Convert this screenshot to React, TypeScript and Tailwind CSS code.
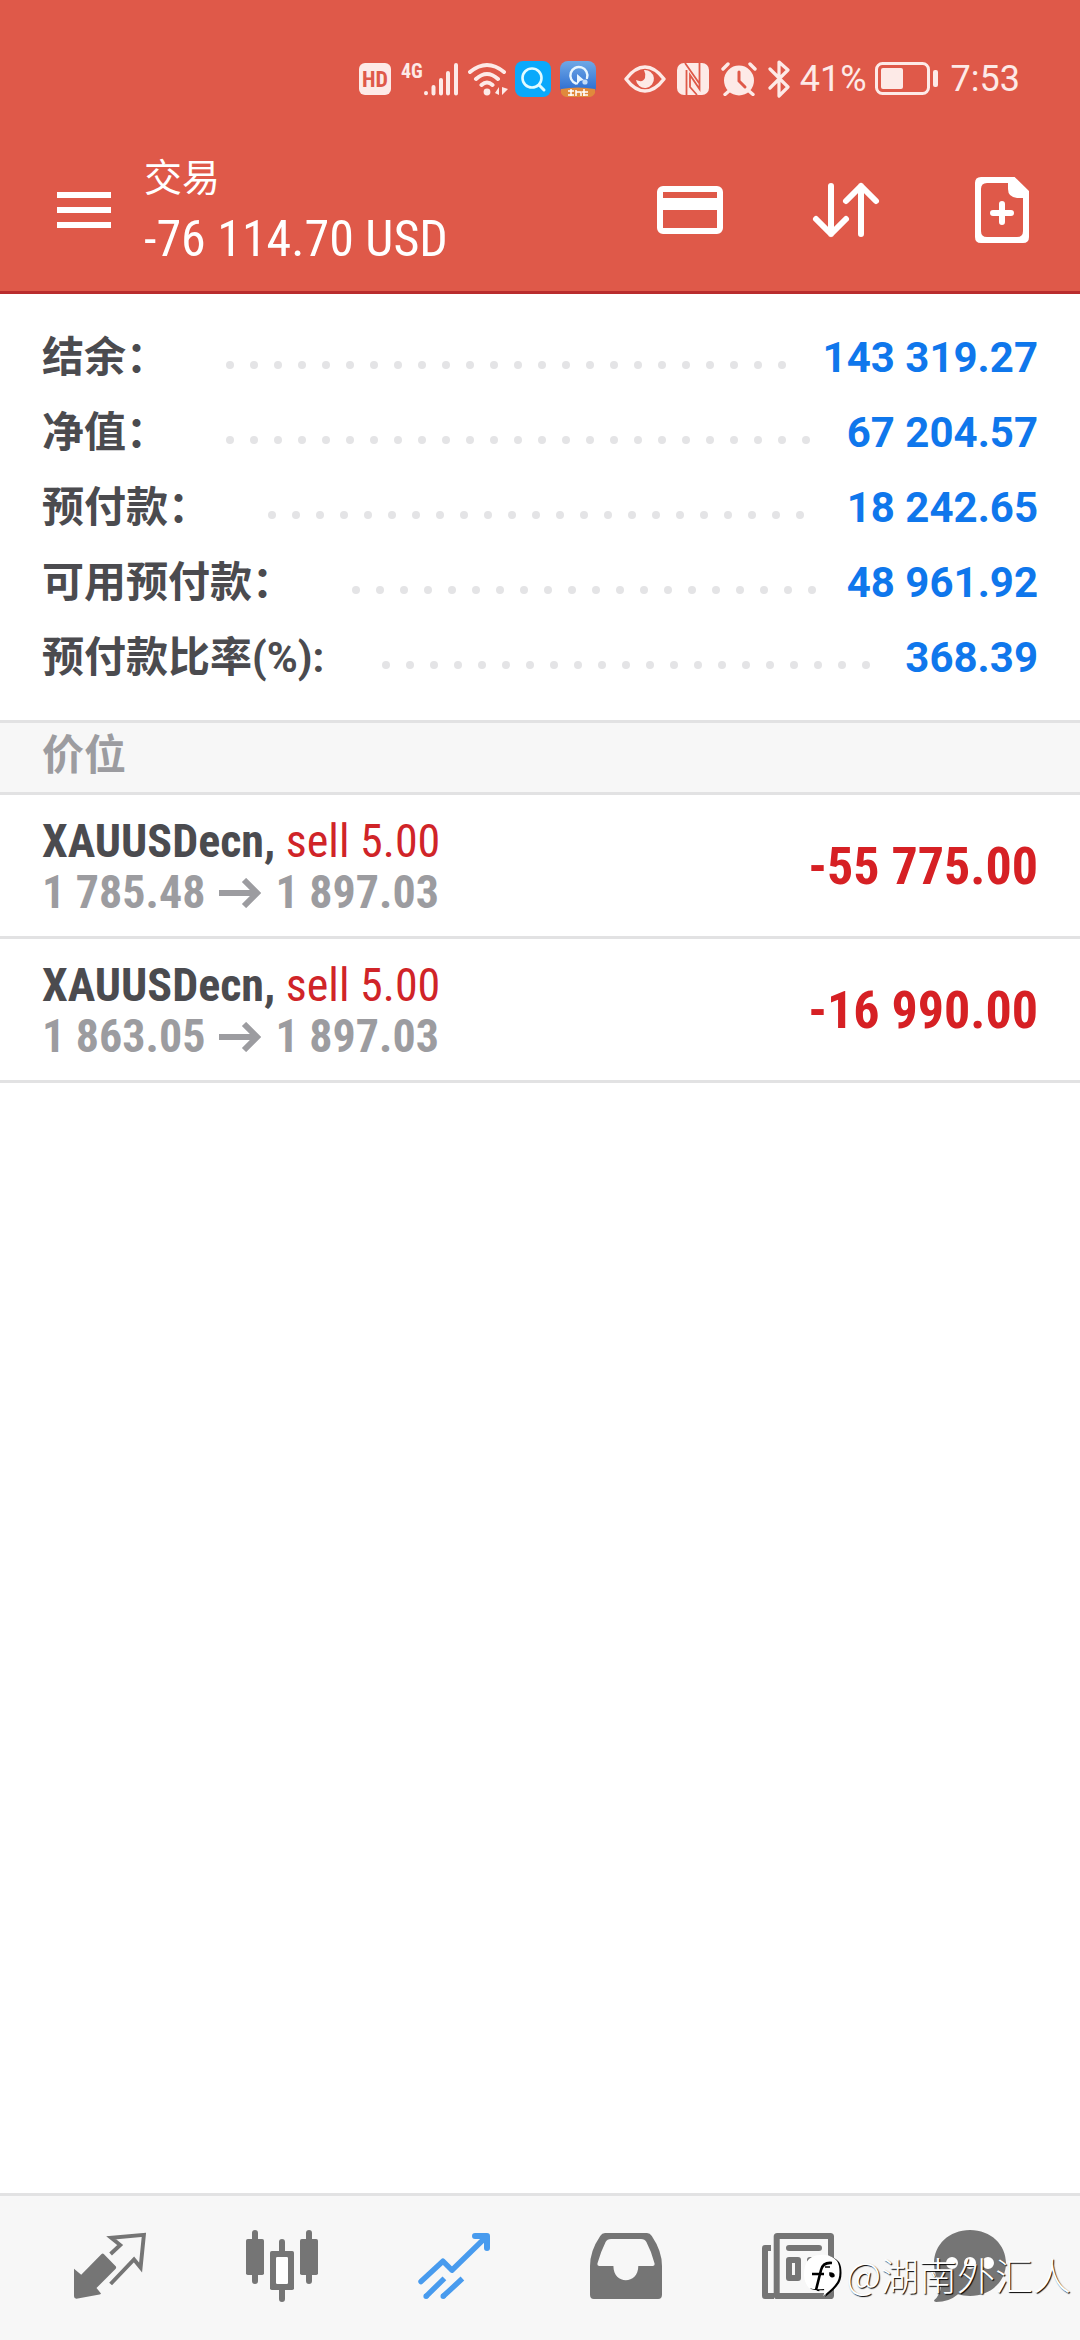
import React from 'react';

const summary = [
  { label: '结余：', value: '143 319.27' },
  { label: '净值：', value: '67 204.57' },
  { label: '预付款：', value: '18 242.65' },
  { label: '可用预付款：', value: '48 961.92' },
  { label: '预付款比率(%):', value: '368.39' },
];

const positions = [
  { id: 1, symbol: 'XAUUSDecn', side: 'sell 5.00', open: '1 785.48', current: '1 897.03', profit: '-55 775.00' },
  { id: 2, symbol: 'XAUUSDecn', side: 'sell 5.00', open: '1 863.05', current: '1 897.03', profit: '-16 990.00' },
];

function StatusBar() {
  return (
    <div className="flex h-[129px] items-center justify-end pr-[60px] pt-[29px] text-[#fdeae7]">
      <span className="flex h-8 w-8 items-center justify-center rounded-md bg-[#fdeae7] font-['Roboto_Condensed',Roboto,sans-serif] text-[22px] font-bold text-[#df5949]">
        HD
      </span>
      <span className="ml-[10px] flex h-[34px] items-start">
        <span className="font-['Roboto_Condensed',Roboto,sans-serif] text-[20px] font-bold leading-[18px]">4G</span>
        <svg className="h-[34px] w-9" viewBox="0 0 36 34" stroke="currentColor" strokeWidth="4" strokeLinecap="round">
          <path d="M3 31v.2M10.500 25v6.500M18 18v13.500M25 11v20.500M33 3v28.500" />
        </svg>
      </span>
      {/* Wi-Fi */}
      <svg className="ml-[9px] h-[34px] w-10" viewBox="0 0 40 34" fill="none" stroke="currentColor" strokeWidth="4" strokeLinecap="round">
        <path d="M2 10Q19-4 36 10M8 17Q19 7 30 17M13.500 23Q19 18 24.500 23" />
        <circle cx="19" cy="30" r="3.400" fill="currentColor" stroke="none" />
        <path d="M27 31l4-6v8zM34 25v8l6-6z" fill="currentColor" stroke="none" />
      </svg>
      {/* Search app */}
      <svg className="ml-[7px] h-9 w-9" viewBox="0 0 36 36" fill="none">
        <rect width="36" height="36" rx="8" fill="#0aa9fb" />
        <circle cx="17" cy="17" r="9.500" stroke="#e2fbff" strokeWidth="2.600" />
        <path d="M24 24l5 5" stroke="#e2fbff" strokeWidth="3" strokeLinecap="round" />
      </svg>
      {/* Browser app */}
      <svg className="ml-[9px] h-9 w-9" viewBox="0 0 36 36" fill="none">
        <defs>
          <linearGradient id="browser" x1="0" y1="0" x2="0" y2="1">
            <stop offset="0" stopColor="#6fa8e6" />
            <stop offset="1" stopColor="#2466cf" />
          </linearGradient>
        </defs>
        <rect width="36" height="34" rx="8" fill="url(#browser)" />
        <path d="M16 22.500A8.500 8.500 0 1 1 27 17" stroke="#e8f6ff" strokeWidth="2.400" strokeLinecap="round" />
        <path d="M17 13l7 6-4 1-3 4z" fill="#e8f6ff" />
        <circle cx="25" cy="21" r="2.600" fill="#c3dcf7" />
        <path d="M1 28q17-3 34 0v4q-2 4-6 4H7q-4 0-6-4z" fill="#e08a3c" />
        <path d="M8 30h6M11 28v7M8 34h6M16 29v6M16 31h5v4M24 28v7M22 31h6M23 34h5" stroke="#fff" strokeWidth="1.500" />
      </svg>
      {/* Eye comfort */}
      <svg className="ml-7 h-7 w-[42px]" viewBox="0 0 42 28" fill="none">
        <path d="M2 14Q11 2 21 2t19 12Q31 26 21 26T2 14z" stroke="currentColor" strokeWidth="3.400" strokeLinejoin="round" />
        <path d="M20 5a9 9 0 1 1-8 10q7 3 9-2 1-4-1-8z" fill="currentColor" />
      </svg>
      {/* NFC */}
      <svg className="ml-[11px] h-[34px] w-8" viewBox="0 0 32 34" fill="none">
        <rect y="1" width="32" height="32" rx="7" fill="currentColor" />
        <path d="M9.500 8v25M8 1l14 20M22.500 1v26L13 13v12l7 8" stroke="#df5949" strokeWidth="1.800" />
      </svg>
      {/* Alarm */}
      <svg className="ml-3 h-[34px] w-9" viewBox="0 0 36 34" fill="none" strokeLinecap="round">
        <circle cx="18" cy="18.500" r="15" fill="currentColor" />
        <path d="M2 7l5-5M34 7l-5-5M8 29l-4 3.500M28 29l4 3.500" stroke="currentColor" strokeWidth="3.400" />
        <path d="M18 10v9l6 6" stroke="#df5949" strokeWidth="3" />
      </svg>
      {/* Bluetooth */}
      <svg className="ml-[11px] h-[38px] w-[22px]" viewBox="0 0 22 38" fill="none" stroke="currentColor" strokeWidth="3.200" strokeLinecap="round" strokeLinejoin="round">
        <path d="M2 9l18 18-9 9V2l9 8L2 28" />
      </svg>
      <span className="ml-[10px] font-[Roboto] text-[36px] leading-10">41%</span>
      {/* Battery */}
      <svg className="ml-2 h-[34px] w-16" viewBox="0 0 64 34" fill="none">
        <rect x="1.500" y="1.500" width="52" height="30" rx="6" stroke="currentColor" strokeWidth="3" />
        <rect x="6" y="6" width="22" height="21" rx="2" fill="currentColor" />
        <rect x="58" y="8" width="5" height="17" rx="2" fill="currentColor" />
      </svg>
      <span className="ml-3 font-[Roboto] text-[36px] leading-10">7:53</span>
    </div>
  );
}

function Toolbar() {
  return (
    <div className="flex h-[162px] items-center pl-12 pr-[42px] text-white">
      <button type="button" aria-label="菜单">
        <svg className="h-[72px] w-[72px]" viewBox="0 0 24 24" fill="currentColor">
          <path d="M3 6h18v2H3zM3 11h18v2H3zM3 16h18v2H3z" />
        </svg>
      </button>
      <div className="ml-6 flex-1 pb-[2px]">
        <h1 className="font-['Noto_Sans_CJK_SC',sans-serif] text-[38px] leading-[60px]">交易</h1>
        <p className="font-['Roboto_Condensed',Roboto,sans-serif] text-[50px] leading-[68px]">-76 114.70 USD</p>
      </div>
      <div className="flex gap-[84px]">
        <button type="button" aria-label="入金">
          <svg className="h-[72px] w-[72px]" viewBox="0 0 24 24" fill="none" stroke="currentColor" strokeWidth="2">
            <rect x="2" y="5" width="20" height="14" rx="1" />
            <path d="M2 10h20" strokeWidth="4" />
          </svg>
        </button>
        <button type="button" aria-label="排序">
          <svg className="h-[72px] w-[72px]" viewBox="0 0 24 24" fill="none" stroke="currentColor" strokeWidth="2" strokeLinecap="round" strokeLinejoin="round">
            <path d="M7 4v16M2 15l5 5 5-5M17 20V4M12 9l5-5 5 5" />
          </svg>
        </button>
        <button type="button" aria-label="新订单">
          <svg className="h-[72px] w-[72px]" viewBox="0 0 24 24" fill="none">
            <path
              fill="currentColor"
              fillRule="evenodd"
              d="M5 1h11.200L21 5.700V21q0 2-2 2H5q-2 0-2-2V3q0-2 2-2zM7 3Q5 3 5 5v14q0 2 2 2h10q2 0 2-2V8h-2q-3-.3-3-3V3z"
            />
            <path d="M12 10v6M9 13h6" stroke="currentColor" strokeWidth="2" strokeLinecap="round" />
          </svg>
        </button>
      </div>
    </div>
  );
}

// Dots wrap onto hidden lines, so only whole ones are ever visible
function Leader() {
  return (
    <span aria-hidden="true" className="ml-[50px] mr-[18px] mt-[14px] flex h-2 flex-1 flex-wrap overflow-hidden">
      {Array.from({ length: 60 }, (_, i) => (
        <span key={i} className="mx-2 h-2 w-2 rounded-full bg-[#e4e4e6]" />
      ))}
    </span>
  );
}

function PriceArrow() {
  return (
    <svg className="mx-[14px] h-[30px] w-[42px]" viewBox="0 0 42 30" fill="none" stroke="currentColor" strokeWidth="6">
      <path d="M0 15h38M25 2l13 13-13 13" />
    </svg>
  );
}

const tabs = [
  {
    name: '行情',
    icon: (
      <>
        <path d="M0 12.900l2.400 2L9.200 8q.4-.3.8.1l3.900 4q.3.4 0 .8l-6.400 6.400 1.500 1.900q-.2.300-.5.3L.8 22.900q-.8 0-.8-.8z" fill="currentColor" />
        <path d="M12.200 8l3.200-3-3-2.400 10.900-1-1.100 10.900L20 9.800 12.200 18" fill="none" stroke="currentColor" strokeWidth="1.300" />
      </>
    ),
  },
  {
    name: '图表',
    icon: (
      <>
        <path d="M3 1v16M21 1v16M12 4v19" stroke="currentColor" strokeWidth="2" strokeLinecap="round" />
        <rect y="3" width="6" height="12" rx=".6" fill="currentColor" />
        <rect x="18" y="3" width="6" height="12" rx=".6" fill="currentColor" />
        <rect x="8" y="7" width="8" height="13" rx=".6" fill="currentColor" />
        <rect x="10" y="9" width="4" height="9" rx=".4" fill="#fff" />
      </>
    ),
  },
  {
    name: '交易',
    active: true,
    icon: (
      <g fill="none" stroke="currentColor" strokeWidth="1.800" strokeLinejoin="round">
        <path d="M1 17.200l7.300-6.800 3 3L22.500 2.500" strokeLinecap="round" />
        <path d="M19 2h4v4" strokeWidth="2" strokeLinecap="round" />
        <path d="M20 2h3v3z" fill="currentColor" stroke="none" />
        <path d="M8.800 16.100l-6.200 6.100M14.800 16.200l-6.500 6" />
        <path d="M2.700 22.100h0M8.400 22.100h0" strokeLinecap="round" />
      </g>
    ),
  },
  {
    name: '历史',
    icon: (
      <path
        fill="currentColor"
        fillRule="evenodd"
        d="M5 1h14q1 0 1.600 1Q24 7 24 12v9.600q0 1.400-1.300 1.400H1.300Q0 23 0 21.600V12Q0 7 3.400 2 4 1 5 1zM7 3q-1.300 0-1.800 1-1.600 3.200-2.700 7.100-.2.900.6.900h4.700c0 6.300 8.300 6.300 8.300 0h4.800q.8 0 .6-.9-1-3.900-2.700-7.100Q18.300 3 17 3z"
      />
    ),
  },
  {
    name: '新闻',
    icon: (
      <>
        <path d="M3 5H1q-1 0-1 1v16q0 1 1 1h3v-2H2V7h1z" fill="currentColor" />
        <rect x="4.900" y="2" width="18.100" height="20" rx=".2" fill="none" stroke="currentColor" strokeWidth="2" />
        <path d="M9 6h10M16 10h3M16 13h3M16 16h3" stroke="currentColor" strokeWidth="2" strokeLinecap="round" />
        <rect x="9" y="10" width="3" height="6" fill="none" stroke="currentColor" strokeWidth="2" strokeLinejoin="round" />
      </>
    ),
  },
  {
    name: '消息',
    icon: (
      <>
        <path d="M0 11C0 5 5 0 12 0s12 5 12 11-5 11-12 11q-2.300 0-4-.6-3 2.600-7.300 2.600-.7 0-.7-.6 2-1.600 2.300-4.400Q0 15 0 11z" fill="currentColor" />
        <path d="M6 11h0M12 11h0M18 11h0" stroke="#fff" strokeWidth="4" strokeLinecap="round" />
      </>
    ),
  },
];

function TabBar() {
  return (
    <nav className="relative border-t-[3px] border-[#e2e2e3] bg-[#f7f7f7] px-6 pb-[38px] pt-[34px]">
      <div className="grid grid-cols-6">
        {tabs.map((tab) => (
          <button
            key={tab.name}
            type="button"
            aria-label={tab.name}
            className={`flex justify-center ${tab.active ? 'text-[#489bee]' : 'text-[#757575]'}`}
          >
            <svg className="h-[72px] w-[72px]" viewBox="0 0 24 24">
              {tab.icon}
            </svg>
          </button>
        ))}
      </div>

      {/* Author signature */}
      <div className="absolute bottom-[42px] right-[9px] flex items-center text-white">
        <svg className="mt-1 h-11 w-10 drop-shadow-[2px_1px_0_#000]" viewBox="0 0 40 44">
          <path d="M18 1q7-1 12 2 6 3 7 9 2 13-4 19-4 5-12 11 2-3 1-7-10 1-15-1-5-6-5-13Q2 10 7 5q5-4 11-4z" fill="#fff" />
          <path d="M10 20h12M14 36l5-20q2-8 11-7" fill="none" stroke="#000" strokeWidth="2.600" />
          <path d="M23 13h5M28 19q4 0 4 3-2 2-4-1z" fill="#000" stroke="#000" strokeWidth="1.500" />
        </svg>
        <span className="ml-1 font-['Noto_Sans_CJK_SC',sans-serif] text-[38px] font-light leading-[44px] [text-shadow:1px_1px_1px_#000]">
          @湖南外汇人
        </span>
      </div>
    </nav>
  );
}

export default function App() {
  return (
    <div className="flex min-h-screen flex-col bg-white">
      <header className="border-b-[3px] border-[#b92c2e] bg-[#df5949]">
        <StatusBar />
        <Toolbar />
      </header>

      <main className="flex-1">
        <dl className="px-[42px] pb-[25px] pt-[26px] font-[Roboto,'Noto_Sans_CJK_SC',sans-serif] text-[42px] leading-[75px]">
          {summary.map((row) => (
            <div key={row.label} className="flex items-center">
              <dt className="font-bold text-[#4b4b4f]">{row.label}</dt>
              <Leader />
              <dd className="font-bold text-[#0f77ec]">{row.value}</dd>
            </div>
          ))}
        </dl>

        <h2 className="border-y-[3px] border-[#e2e2e3] bg-[#f7f7f7] px-[42px] pb-[11px] font-['Noto_Sans_CJK_SC',sans-serif] text-[42px] font-bold leading-[58px] text-[#9c9ca0]">
          价位
        </h2>

        <ul className="font-['Roboto_Condensed',Roboto,sans-serif]">
          {positions.map((p) => (
            <li key={p.id} className="flex items-center justify-between border-b-[3px] border-[#e2e2e3] px-[42px] pb-[18px] pt-[21px]">
              <div className="text-[46px] font-bold leading-[51px]">
                <p className="text-[#4b4b4f]">
                  {p.symbol}, <span className="font-normal text-[#d02428]">{p.side}</span>
                </p>
                <p className="flex items-center text-[#9c9ca0]">
                  {p.open}
                  <PriceArrow />
                  {p.current}
                </p>
              </div>
              <span className="text-[52px] font-bold leading-[60px] text-[#d62024]">{p.profit}</span>
            </li>
          ))}
        </ul>
      </main>

      <TabBar />
    </div>
  );
}
